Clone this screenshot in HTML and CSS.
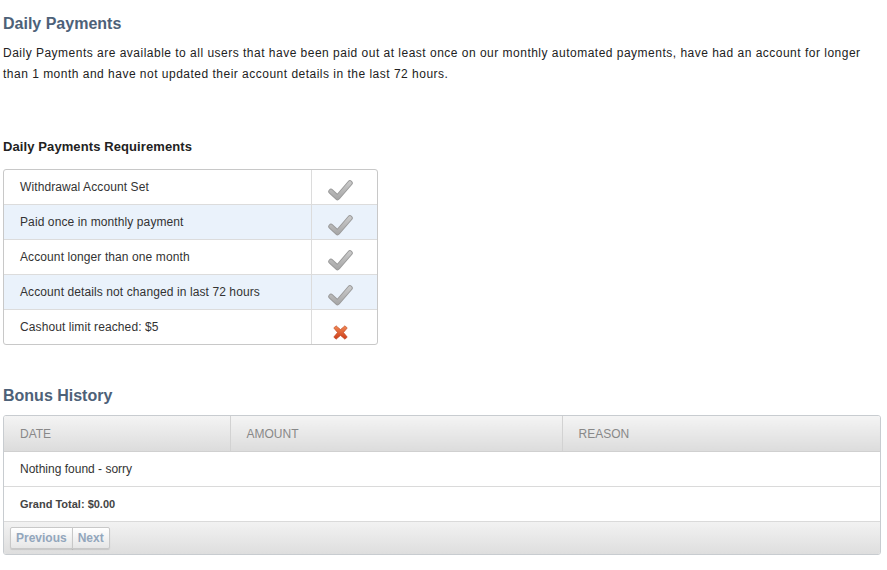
FILE: index.html
```html
<!DOCTYPE html>
<html>
<head>
<meta charset="utf-8">
<link rel="stylesheet" href="styles.css">
</head>
<body>
<svg class="defs" width="0" height="0" aria-hidden="true">
  <defs>
    <linearGradient id="cg" x1="0" y1="0" x2="0" y2="22" gradientUnits="userSpaceOnUse"><stop offset="0" stop-color="#cfcfcf"/><stop offset="1" stop-color="#a3a3a3"/></linearGradient>
    <linearGradient id="xg" x1="0" y1="0" x2="0" y2="1"><stop offset="0" stop-color="#f28a55"/><stop offset="1" stop-color="#cc3b18"/></linearGradient>
  </defs>
</svg>
<div class="page">
  <h2 class="title">Daily Payments</h2>
  <p class="intro">Daily Payments are available to all users that have been paid out at least once on our monthly automated payments, have had an account for longer than 1 month and have not updated their account details in the last 72 hours.</p>

  <h4 class="sub">Daily Payments Requirements</h4>
  <table class="req">
    <colgroup><col class="req-label"><col class="req-icon"></colgroup>
    <tr><td>Withdrawal Account Set</td><td class="icon"><svg class="check" viewBox="0 0 25 22"><polyline points="3,12.5 9.5,18.5 22,4" fill="none" stroke="#9a9a9a" stroke-width="5.5" stroke-linecap="round" stroke-linejoin="round"/><polyline points="3,12.5 9.5,18.5 22,4" fill="none" stroke="url(#cg)" stroke-width="3.6" stroke-linecap="round" stroke-linejoin="round"/></svg></td></tr>
    <tr class="alt"><td>Paid once in monthly payment</td><td class="icon"><svg class="check" viewBox="0 0 25 22"><polyline points="3,12.5 9.5,18.5 22,4" fill="none" stroke="#9a9a9a" stroke-width="5.5" stroke-linecap="round" stroke-linejoin="round"/><polyline points="3,12.5 9.5,18.5 22,4" fill="none" stroke="url(#cg)" stroke-width="3.6" stroke-linecap="round" stroke-linejoin="round"/></svg></td></tr>
    <tr><td>Account longer than one month</td><td class="icon"><svg class="check" viewBox="0 0 25 22"><polyline points="3,12.5 9.5,18.5 22,4" fill="none" stroke="#9a9a9a" stroke-width="5.5" stroke-linecap="round" stroke-linejoin="round"/><polyline points="3,12.5 9.5,18.5 22,4" fill="none" stroke="url(#cg)" stroke-width="3.6" stroke-linecap="round" stroke-linejoin="round"/></svg></td></tr>
    <tr class="alt"><td>Account details not changed in last 72 hours</td><td class="icon"><svg class="check" viewBox="0 0 25 22"><polyline points="3,12.5 9.5,18.5 22,4" fill="none" stroke="#9a9a9a" stroke-width="5.5" stroke-linecap="round" stroke-linejoin="round"/><polyline points="3,12.5 9.5,18.5 22,4" fill="none" stroke="url(#cg)" stroke-width="3.6" stroke-linecap="round" stroke-linejoin="round"/></svg></td></tr>
    <tr><td>Cashout limit reached: $5</td><td class="icon"><svg class="cross" viewBox="0 0 16 16"><path d="M3.2 0.8 L8 4.8 L12.8 0.8 L15.2 3.2 L11.2 8 L15.2 12.8 L12.8 15.2 L8 11.2 L3.2 15.2 L0.8 12.8 L4.8 8 L0.8 3.2 Z" fill="url(#xg)" stroke="#b8401c" stroke-width="0.6" stroke-linejoin="round"/></svg></td></tr>
  </table>

  <h2 class="title bonus-title">Bonus History</h2>
  <div class="grid">
    <table class="grid-table">
      <colgroup><col class="c-date"><col class="c-amount"><col class="c-reason"></colgroup>
      <thead>
        <tr><th>Date</th><th>Amount</th><th>Reason</th></tr>
      </thead>
      <tbody>
        <tr><td colspan="3">Nothing found - sorry</td></tr>
        <tr class="total"><td colspan="3">Grand Total: $0.00</td></tr>
      </tbody>
    </table>
    <div class="grid-foot">
      <div class="pager"><button class="pbtn">Previous</button><button class="pbtn">Next</button></div>
    </div>
  </div>
</div>
</body>
</html>
```

FILE: styles.css
```css
html, body {
  margin: 0;
  padding: 0;
  background: #fff;
}
.defs {
  position: absolute;
  width: 0;
  height: 0;
}
.page {
  padding: 0 6px 0 3px;
  font-family: "Liberation Sans", Arial, sans-serif;
  font-size: 12px;
  color: #333;
}
.title {
  margin: 14px 0 0;
  font-size: 16px;
  line-height: 20px;
  font-weight: bold;
  color: #4d6178;
}
.intro {
  margin: 9px 0 0;
  font-size: 12px;
  line-height: 21px;
  letter-spacing: 0.49px;
  color: #222;
}
.sub {
  margin: 54px 0 0;
  font-size: 13px;
  line-height: 16px;
  letter-spacing: 0.1px;
  font-weight: bold;
  color: #222;
}
.req {
  margin-top: 14px;
  width: 375px;
  border-collapse: separate;
  border-spacing: 0;
  border: 1px solid #c8c8c8;
  border-radius: 3px;
  table-layout: fixed;
}
.req-label { width: 307px; }
.req-icon { width: 66px; }
.req td {
  height: 34px;
  padding: 0 0 0 16px;
  border-top: 1px solid #dcdcdc;
  vertical-align: middle;
  color: #333;
  line-height: 16px;
  letter-spacing: 0.1px;
}
.req tr:first-child td { border-top: none; }
.req td.icon {
  padding: 0 8px 0 0;
  border-left: 1px solid #dcdcdc;
  text-align: center;
}
.req tr.alt td { background: #eaf2fb; }
.check {
  display: inline-block;
  width: 25px;
  height: 22px;
  vertical-align: middle;
  margin-top: 5px;
}
.cross {
  display: inline-block;
  width: 15px;
  height: 15px;
  vertical-align: middle;
  margin-top: 10px;
}
.bonus-title {
  margin-top: 41px;
}
.grid {
  margin-top: 9px;
  border: 1px solid #c8ccd0;
  border-radius: 3px;
  overflow: hidden;
}
.grid-table {
  width: 100%;
  border-collapse: collapse;
  table-layout: fixed;
}
.c-date { width: 226px; }
.c-amount { width: 332px; }
.grid-table th {
  height: 35px;
  padding: 0 0 0 16px;
  text-align: left;
  font-weight: normal;
  text-transform: uppercase;
  color: #888;
  font-size: 12px;
  background: linear-gradient(#f4f4f4, #dcdcdc);
  border-left: 1px solid #d2d2d2;
  border-bottom: 1px solid #d0d0d0;
}
.grid-table th:first-child { border-left: none; }
.grid-table td {
  height: 34px;
  padding: 0 0 0 16px;
  border-bottom: 1px solid #dadada;
  color: #333;
}
.grid-table tr.total td {
  font-weight: bold;
  font-size: 11px;
  color: #444;
}
.grid-foot {
  height: 32px;
  background: linear-gradient(#f2f2f2, #dedede);
  display: flex;
  align-items: center;
  padding-left: 6px;
}
.pager {
  display: flex;
}
.pbtn {
  height: 22px;
  margin: 0;
  padding: 0 5px;
  font-family: "Liberation Sans", Arial, sans-serif;
  font-size: 12px;
  font-weight: bold;
  color: #92a6bc;
  background: linear-gradient(#ffffff, #e6e6e6);
  border: 1px solid #c8c8c8;
  box-shadow: 0 1px 1px rgba(0,0,0,0.12);
}
.pbtn + .pbtn { border-left: 1px solid #c8c8c8; margin-left: -1px; }
.pbtn:first-child { border-radius: 2px 0 0 2px; }
.pbtn:last-child { border-radius: 0 2px 2px 0; }
```
